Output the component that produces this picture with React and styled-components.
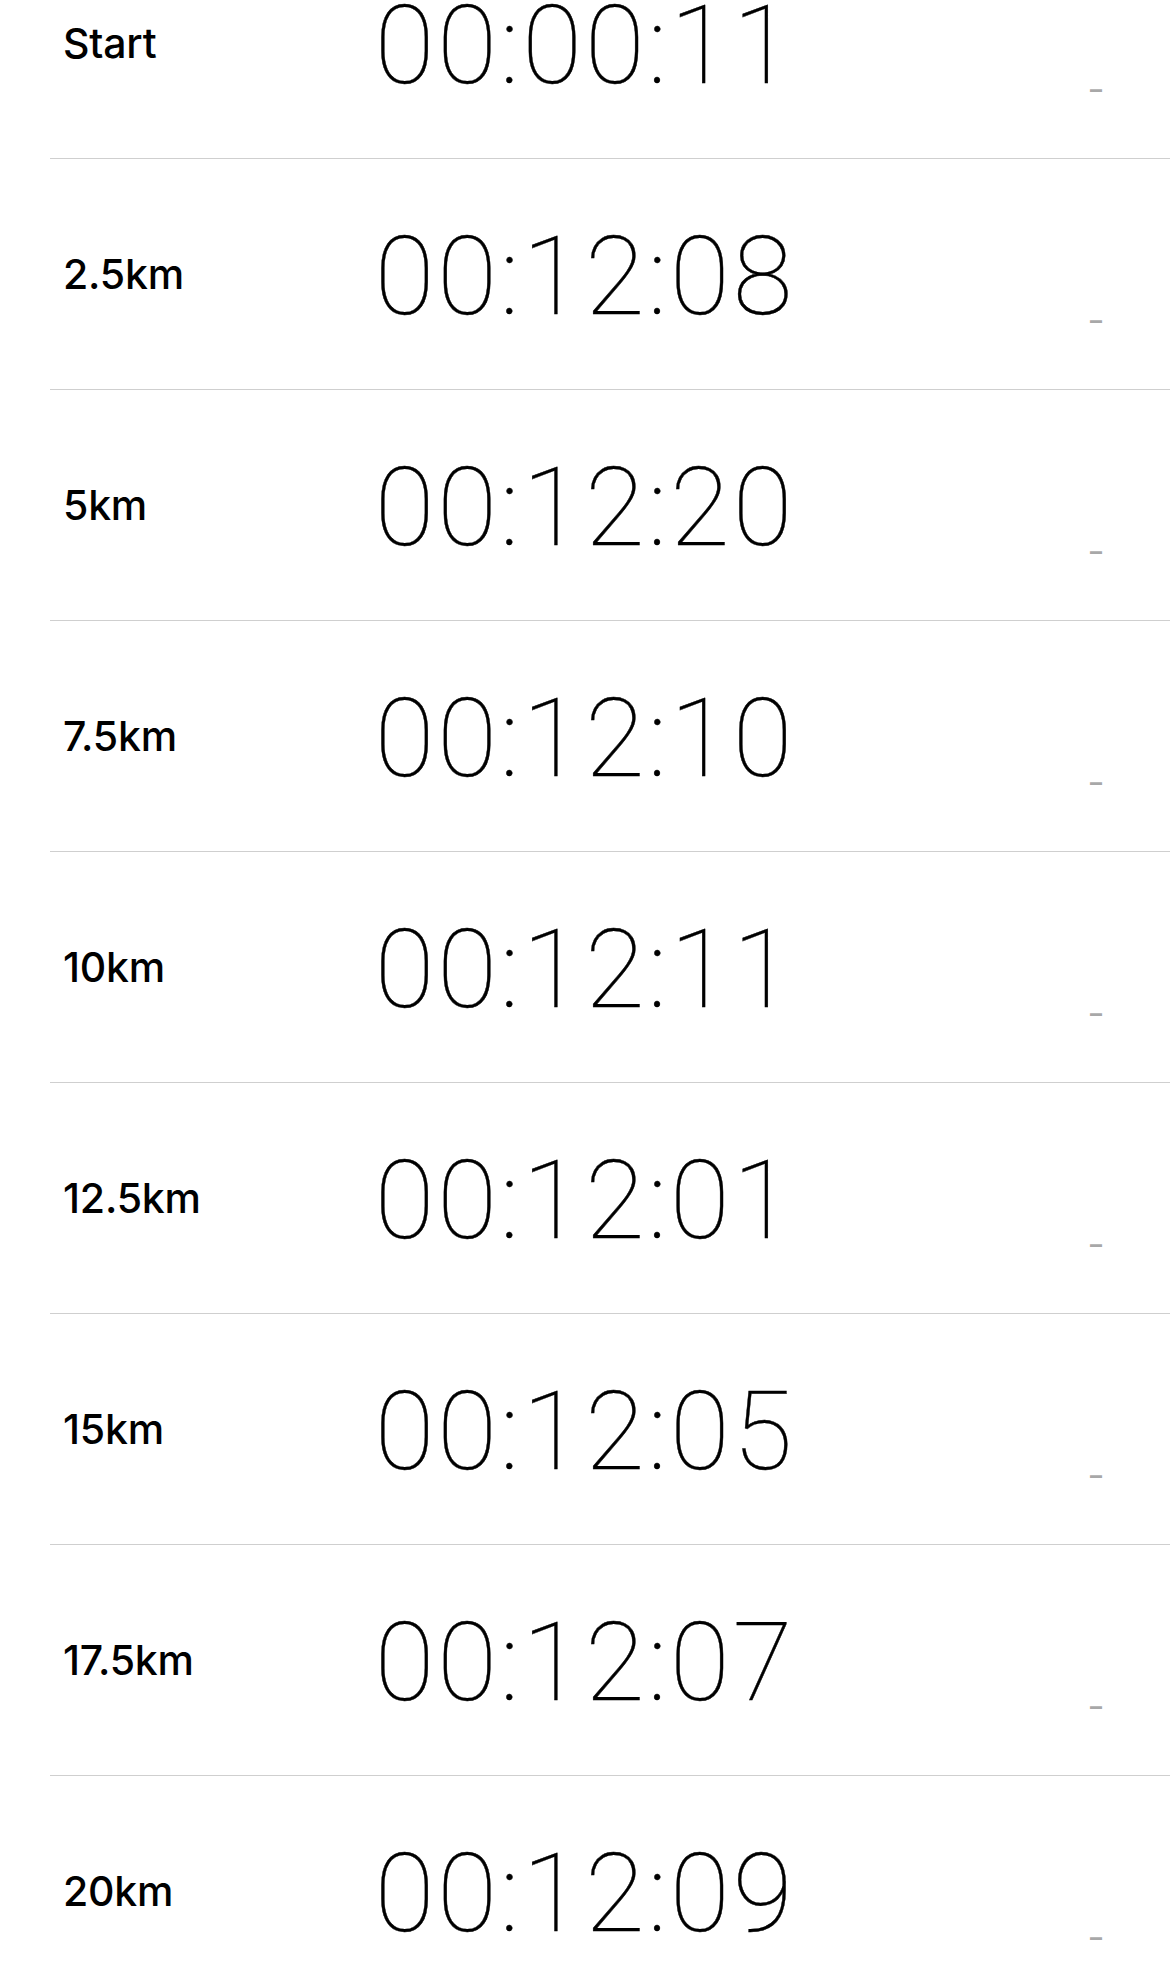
import React from 'react';
import styled, { createGlobalStyle } from 'styled-components';

const GlobalStyle = createGlobalStyle`
	html, body {
		margin: 0;
		padding: 0;
		background: #fff;
		overflow: hidden;
	}
	body {
		font-family: Inter, "Liberation Sans", sans-serif;
		color: #000;
	}
`;

const SplitList = styled.div`
	display: flex;
	flex-direction: column;
	margin-top: -72px;
`;

const Row = styled.div`
	display: grid;
	grid-template-columns: 1fr auto 1fr;
	align-items: center;
	height: 230px;
`;

const Label = styled.div`
	padding-left: 63px;
	font-size: 41px;
	font-weight: 500;
	letter-spacing: -0.2px;
`;

const Time = styled.div`
	font-family: Roboto, Inter, sans-serif;
	font-size: 109px;
	font-weight: 100;
	letter-spacing: 3px;
	line-height: 1;
	padding-top: 6px;
	-webkit-text-stroke: 0.4px #000;
`;

const Note = styled.div`
	justify-self: end;
	align-self: end;
	margin: 0 68px 56px 0;
	font-size: 24px;
	font-weight: 700;
	line-height: 1;
	color: #a8a8a8;
`;

const Divider = styled.div`
	height: 1px;
	margin-left: 50px;
	background: #cfcfcf;
`;

const splits = [
	['Start', '00:00:11'],
	['2.5km', '00:12:08'],
	['5km', '00:12:20'],
	['7.5km', '00:12:10'],
	['10km', '00:12:11'],
	['12.5km', '00:12:01'],
	['15km', '00:12:05'],
	['17.5km', '00:12:07'],
	['20km', '00:12:09'],
];

const App = () => {
	return (
		<>
			<GlobalStyle />
			<SplitList>
				{splits.map(([label, time], i) => (
					<React.Fragment key={label}>
						{i > 0 && <Divider />}
						<Row>
							<Label>{label}</Label>
							<Time>{time}</Time>
							<Note>–</Note>
						</Row>
					</React.Fragment>
				))}
			</SplitList>
		</>
	);
};

export default App;
